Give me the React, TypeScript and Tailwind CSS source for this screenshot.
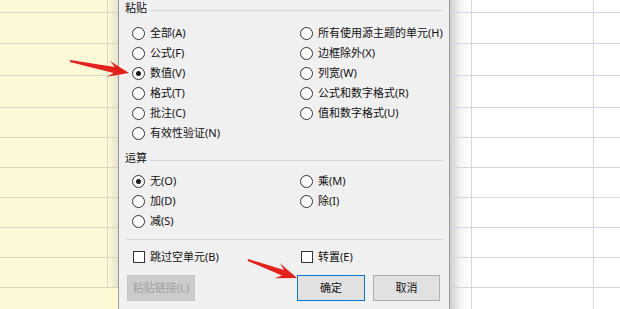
const font = { fontFamily: '"Noto Sans", "Noto Sans CJK SC", sans-serif' };

const rowHeights = [
  "h-[13px]",
  "h-[31px]",
  "h-[32px]",
  "h-[32px]",
  "h-[30px]",
  "h-[30px]",
  "h-[30px]",
  "h-[30px]",
  "h-[30px]",
  "h-[30px]",
];

const arrowPoints = (x1: number, y1: number, x2: number, y2: number) => {
  const dx = x2 - x1;
  const dy = y2 - y1;
  const len = Math.sqrt(dx * dx + dy * dy);
  const ux = dx / len;
  const uy = dy / len;
  const nx = -uy;
  const ny = ux;
  const p = (along: number, side: number) =>
    `${(x2 - ux * along + nx * side).toFixed(1)},${(y2 - uy * along + ny * side).toFixed(1)}`;
  return [
    p(len, -1),
    p(15, -3),
    p(21, -8),
    p(0, 0),
    p(21, 8),
    p(15, 3),
    p(len, 1),
  ].join(" ");
};

const Radio = ({ label, checked }: { label: string; checked?: boolean }) => (
  <div className="flex items-center h-[20px]">
    <span className="w-[13px] h-[13px] rounded-full border border-[#333333] bg-white flex items-center justify-center shrink-0">
      {checked && <span className="w-[5px] h-[5px] rounded-full bg-[#1a1a1a]" />}
    </span>
    <span className="ml-[5px] whitespace-nowrap">{label}</span>
  </div>
);

const Check = ({ label }: { label: string }) => (
  <div className="flex items-center h-[20px]">
    <span className="w-[12px] h-[12px] border border-[#333333] bg-white shrink-0" />
    <span className="ml-[5px] whitespace-nowrap">{label}</span>
  </div>
);

const GroupTitle = ({ title }: { title: string }) => (
  <div className="flex items-center h-[16px]">
    <span className="whitespace-nowrap">{title}</span>
    <div className="flex-1 h-px bg-[#d6d6d6] ml-[3px] mt-[5px]" />
  </div>
);

export default function App() {
  return (
    <div
      className="relative w-[620px] h-[309px] overflow-hidden flex bg-white text-[11px] leading-[16px] text-[#111111]"
      style={font}
    >
      {/* left sheet, yellow cells */}
      <div className="w-[118px] h-full bg-[#fdf9d7] flex flex-col shrink-0">
        {rowHeights.map((h, i) => (
          <div key={i} className={`${h} flex border-b border-[#d9d6c6] shrink-0`}>
            <div className="w-[108px] border-r border-[#d9d6c6]" />
            <div className="flex-1 bg-gradient-to-r from-transparent to-[#e6e3d0]" />
          </div>
        ))}
      </div>

      {/* dialog */}
      <div className="w-[332px] h-full bg-[#f0f0f0] border-l border-r border-[#9a9a9a] shrink-0 flex flex-col px-[6px]">
        <GroupTitle title="粘贴" />
        <div className="grid grid-cols-[168px_1fr] pl-[7px] mt-[7px]">
          <Radio label="全部(A)" />
          <Radio label="所有使用源主题的单元(H)" />
          <Radio label="公式(F)" />
          <Radio label="边框除外(X)" />
          <Radio label="数值(V)" checked />
          <Radio label="列宽(W)" />
          <Radio label="格式(T)" />
          <Radio label="公式和数字格式(R)" />
          <Radio label="批注(C)" />
          <Radio label="值和数字格式(U)" />
          <Radio label="有效性验证(N)" />
        </div>

        <div className="mt-[7px]">
          <GroupTitle title="运算" />
        </div>
        <div className="grid grid-cols-[168px_1fr] pl-[7px] mt-[5px]">
          <Radio label="无(O)" checked />
          <Radio label="乘(M)" />
          <Radio label="加(D)" />
          <Radio label="除(I)" />
          <Radio label="减(S)" />
        </div>

        <div className="h-px bg-[#d6d6d6] mt-[8px] ml-[1px]" />

        <div className="grid grid-cols-[168px_1fr] pl-[8px] mt-[7px]">
          <Check label="跳过空单元(B)" />
          <Check label="转置(E)" />
        </div>

        <div className="flex mt-[8px] pl-[2px]">
          <div className="w-[68px] h-[26px] bg-[#cccccc] border border-[#c4c4c4] text-[#a3a3a3] flex items-center justify-center">
            粘贴链接(L)
          </div>
          <div className="w-[102px]" />
          <div className="w-[68px] h-[26px] bg-[#e1e1e1] border border-[#0078d7] flex items-center justify-center">
            确定
          </div>
          <div className="w-[67px] h-[26px] ml-[8px] bg-[#e1e1e1] border border-[#adadad] flex items-center justify-center">
            取消
          </div>
        </div>
      </div>

      {/* right sheet */}
      <div className="flex-1 h-full flex flex-col">
        {rowHeights.map((h, i) => (
          <div key={i} className={`${h} flex border-b border-[#d5d4e3] shrink-0`}>
            <div className="w-[22px] border-r border-[#d5d4e3] bg-gradient-to-r from-[#cfcfcf] via-[#f4f4f4] to-white" />
            <div className="w-[122px] border-r border-[#d5d4e3]" />
            <div className="flex-1" />
          </div>
        ))}
        <div className="flex-1 flex">
          <div className="w-[22px] border-r border-[#d5d4e3] bg-gradient-to-r from-[#cfcfcf] via-[#f4f4f4] to-white" />
          <div className="w-[122px] border-r border-[#d5d4e3]" />
        </div>
      </div>

      {/* red arrows */}
      <svg className="absolute left-0 top-0 pointer-events-none" width="620" height="309">
        <polygon points={arrowPoints(70, 61, 129, 73)} fill="#e5211c" />
        <polygon points={arrowPoints(248, 260, 297, 278)} fill="#e5211c" />
      </svg>
    </div>
  );
}
